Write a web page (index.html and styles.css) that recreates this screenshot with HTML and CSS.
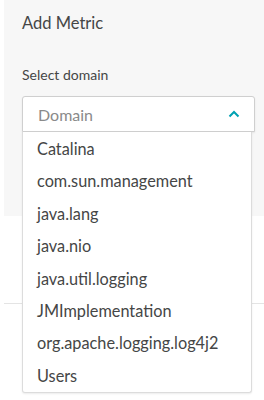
FILE: index.html
```html
<!DOCTYPE html>
<html lang="en">
<head>
  <meta charset="UTF-8" />
  <meta name="viewport" content="width=device-width, initial-scale=1.0"/>
  <title>Add Metric</title>
  <link rel="stylesheet" href="styles.css">
</head>
<body>

  <div class="panel">
    <h2 class="panel-title">Add Metric</h2>
    <label class="field-label">Select domain</label>

    <div class="select">
      <div class="select-box">
        <span class="placeholder">Domain</span>
        <svg class="chevron" width="12" height="8" viewBox="0 0 12 8">
          <path d="M1.5 6.5 L6 2 L10.5 6.5" fill="none" stroke="#00a1b2" stroke-width="2"/>
        </svg>
      </div>

      <ul class="menu">
        <li>Catalina</li>
        <li>com.sun.management</li>
        <li>java.lang</li>
        <li>java.nio</li>
        <li>java.util.logging</li>
        <li>JMImplementation</li>
        <li>org.apache.logging.log4j2</li>
        <li>Users</li>
      </ul>
    </div>
  </div>

  <div class="section"></div>

</body>
</html>
```

FILE: styles.css
```css
* {
  box-sizing: border-box;
}

html, body {
  min-height: 400px;
}

body {
  margin: 0;
  background: #fff;
  font-family: Lato, 'Noto Sans', sans-serif;
  color: #454646;
}

.panel {
  position: relative;
  z-index: 1;
  margin-left: 4px;
  height: 216px;
  background: #f7f7f7;
  padding: 12px 0 0 18px;
}

.panel-title {
  margin: 0;
  font-size: 16.5px;
  font-weight: normal;
  line-height: 22px;
}

.field-label {
  display: block;
  margin-top: 32px;
  font-size: 14px;
  line-height: 18px;
}

.select {
  position: relative;
  width: 233px;
  margin-top: 12px;
}

.select-box {
  display: flex;
  align-items: center;
  justify-content: space-between;
  height: 36px;
  padding: 0 14px 0 15px;
  background: #fff;
  border: 1px solid #cfcfcf;
  border-radius: 3px 3px 0 0;
  box-shadow: 0 1px 2px rgba(0, 0, 0, 0.08);
}

.placeholder {
  font-size: 16px;
  color: #8a8a8a;
}

.menu {
  position: absolute;
  top: 36px;
  left: 0;
  width: 230px;
  margin: 0;
  padding: 1px 0 0;
  list-style: none;
  background: #fff;
  border: 1px solid #dcdcdc;
  border-top: none;
  border-radius: 0 0 3px 3px;
  box-shadow: 0 1px 2px rgba(0, 0, 0, 0.08);
}

.menu li {
  padding-left: 14px;
  font-size: 16.3px;
  line-height: 32.4px;
}

.section {
  margin-left: 4px;
  height: 88px;
  border-bottom: 1px solid #e4e4e4;
}
```
